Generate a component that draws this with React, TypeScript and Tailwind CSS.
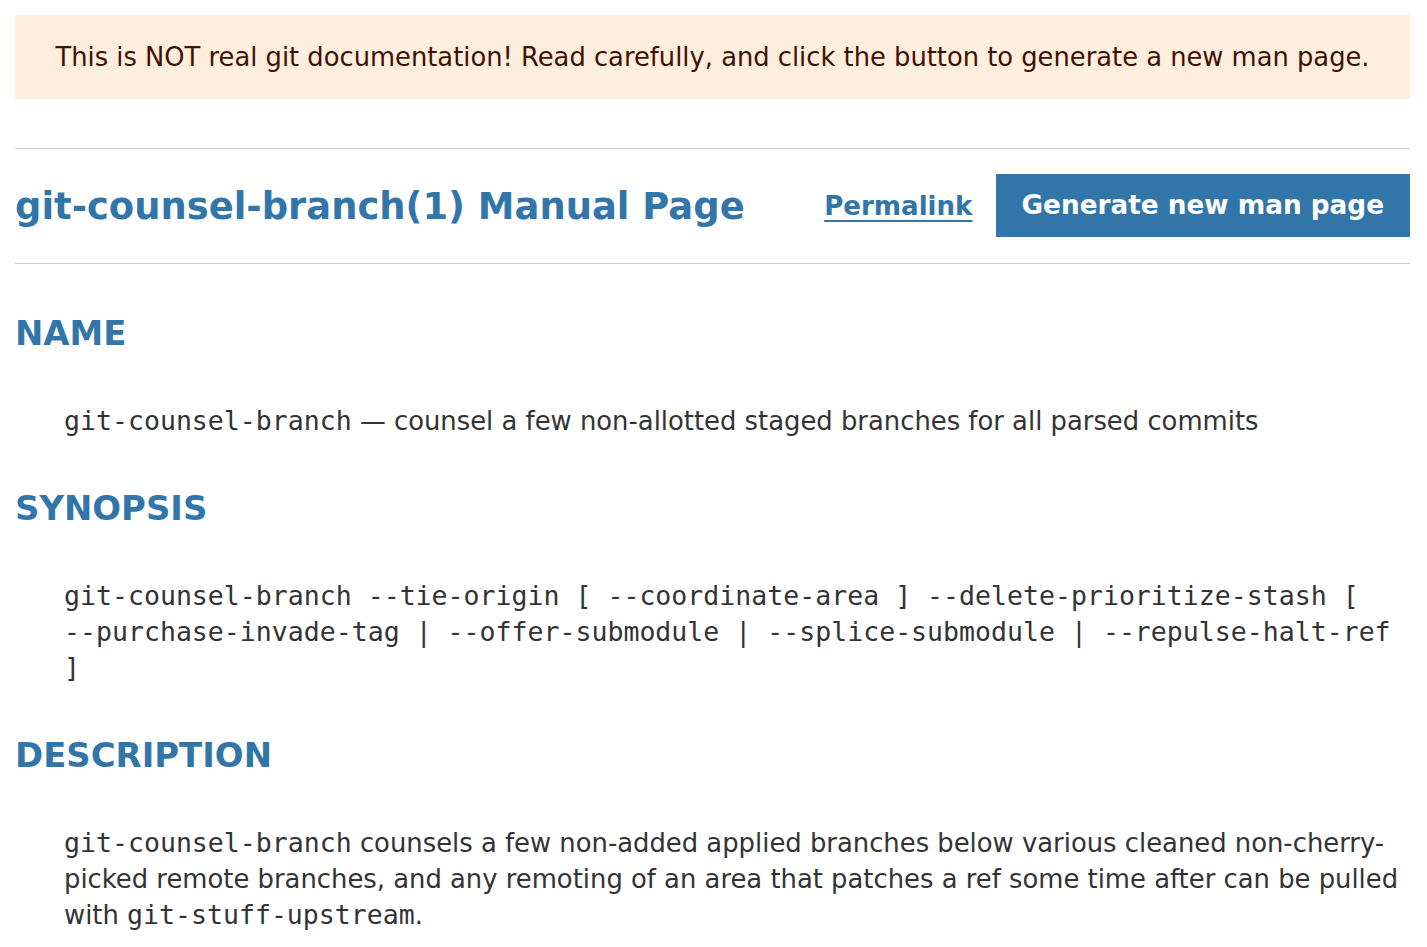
const sans = "font-['DejaVu_Sans',sans-serif]";
const mono = "font-['DejaVu_Sans_Mono',monospace] text-[26.55px]";

function Section({ title, children }: { title: string; children: React.ReactNode }) {
  return (
    <section>
      <h2 className="mt-[50px] mb-[49px] text-[33.9px] leading-[40px] font-bold text-[#3275a9]">{title}</h2>
      <div className="ml-[49px] text-[25.85px] leading-[36px] text-[#333]">{children}</div>
    </section>
  );
}

const OPTS = [
  "git-counsel-branch",
  "--tie-origin",
  "[",
  "--coordinate-area",
  "]",
  "--delete-prioritize-stash",
  "[",
  "--purchase-invade-tag",
  "|",
  "--offer-submodule",
  "|",
  "--splice-submodule",
  "|",
  "--repulse-halt-ref",
  "]",
];

export default function App() {
  return (
    <div className={`${sans} bg-white min-h-[947px] pt-[15px] pl-[15px] pr-[17px]`}>
      <div className="h-[84px] bg-[#ffedde] flex items-center justify-center text-[25.78px] text-[#3f1200]">
        This is NOT real git documentation! Read carefully, and click the button to generate a new man page.
      </div>

      <div className="mt-[49px] border-t border-[#cccccc]" />
      <div className="flex items-center pt-[25px] pb-[26px]">
        <h1 className="flex-1 pt-[3px] text-[36.9px] font-bold text-[#3275a9] leading-none">
          git-counsel-branch(1) Manual Page
        </h1>
        <a href="#" className="mr-[24px] pt-[2px] text-[26.1px] font-bold text-[#3275a9] underline underline-offset-[5px] decoration-2">
          Permalink
        </a>
        <button className="h-[63px] pl-[25px] pr-[26px] pt-[1px] bg-[#3275a9] text-white text-[26.3px] font-bold">
          Generate new man page
        </button>
      </div>
      <div className="border-t border-[#cccccc]" />

      <Section title="NAME">
        <p>
          <code className={mono}>git-counsel-branch</code> — counsel a few non-allotted staged branches for all parsed
          commits
        </p>
      </Section>

      <Section title="SYNOPSIS">
        <p className={`${mono} leading-[36px]`}>
          {OPTS.map((o, i) => (
            <span key={i}>
              <span className="whitespace-nowrap">{o}</span>
              {i < OPTS.length - 1 ? " " : ""}
            </span>
          ))}
        </p>
      </Section>

      <Section title="DESCRIPTION">
        <p>
          <code className={mono}>git-counsel-branch</code> counsels a few non-added applied branches below various
          cleaned non-cherry-picked remote branches, and any remoting of an area that patches a ref some time after can
          be pulled with <code className={mono}>git-stuff-upstream</code>.
        </p>
      </Section>
    </div>
  );
}
